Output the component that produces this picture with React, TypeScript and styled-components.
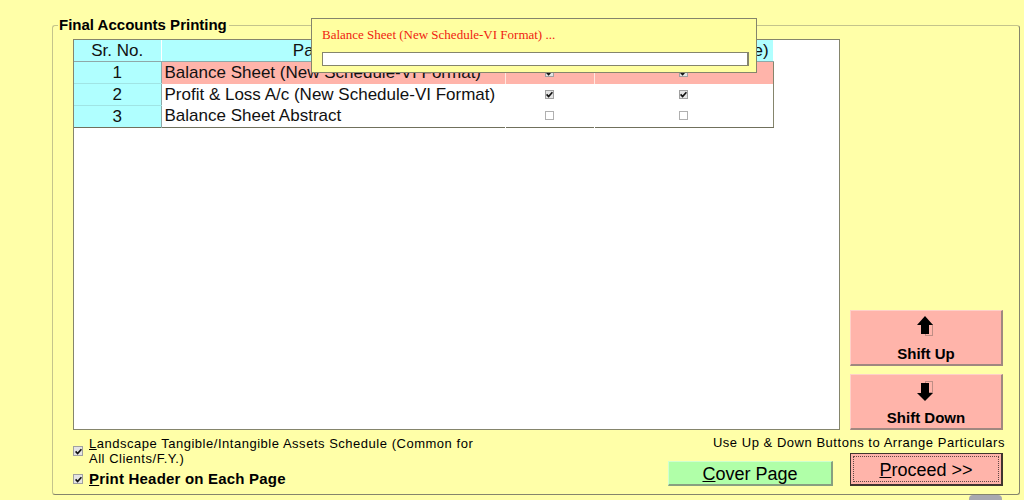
import React from "react"
import styled, { createGlobalStyle } from "styled-components"

const GlobalStyle = createGlobalStyle`
  html, body {
    margin: 0;
    padding: 0;
    background: #ffffa8;
  }
`

const SPage = styled.div`
  position: relative;
  width: 1024px;
  height: 500px;
  overflow: hidden;
  padding: 25px 4px 0 52px;
  box-sizing: border-box;
  background: #ffffa8;
  font-family: "Liberation Sans", Arial, sans-serif;
  color: #000;
`

const SFrame = styled.div`
  position: relative;
  box-sizing: border-box;
  height: 470px;
  padding: 13px 14px 0 20px;
  border: 1px solid #c4c48c;
  border-right-color: #85856c;
  border-bottom-color: #85856c;
  border-radius: 3px;
`

const SLegend = styled.div`
  position: absolute;
  top: -10px;
  left: 5px;
  padding: 0 2px 0 1px;
  background: #ffffa8;
  font-size: 15px;
  line-height: 17px;
  font-weight: bold;
  white-space: nowrap;
`

const SMainRow = styled.div`
  display: flex;
  height: 391px;
`

const SGridPanel = styled.div`
  box-sizing: border-box;
  width: 767px;
  height: 391px;
  background: #fff;
  border: 1px solid #85856c;
`

const STable = styled.table`
  width: 699px;
  table-layout: fixed;
  border-collapse: collapse;
  border-bottom: 1px solid #70705c;
  border-right: 1px solid #85856c;
  font-size: 17px;
  line-height: 20px;
  color: #111;
`

const SCol = styled.col<{ $w: number }>`
  width: ${(p) => p.$w}px;
`

const SHeadCell = styled.th`
  height: 21px;
  padding: 0;
  background: #b0ffff;
  font-weight: normal;
  text-align: center;
  white-space: nowrap;
  overflow: hidden;
  border-right: 1px solid #fff;
  border-bottom: 1px solid #8fa8a8;
`

const SNumCell = styled.td`
  height: 21px;
  padding: 0;
  background: #b0ffff;
  text-align: center;
  border-right: 1px solid #8fa8a8;

  tr:not(:last-child) > & {
    border-bottom: 1px solid #a0e4e4;
  }
`

const SNameCell = styled.td<{ $active?: boolean }>`
  padding: 0 0 0 3px;
  white-space: nowrap;
  background: ${(p) => (p.$active ? "#ffb4aa" : "#fff")};
`

const SCheckCell = styled.td<{ $active?: boolean }>`
  padding: 0 0 1px;
  text-align: center;
  line-height: 0;
  background: ${(p) => (p.$active ? "#ffb4aa" : "#fff")};
  border-left: 1px solid ${(p) => (p.$active ? "#ffe8e0" : "#fff")};
`

const SBox = styled.span<{ $on?: boolean; $size?: number }>`
  display: inline-flex;
  align-items: center;
  justify-content: center;
  box-sizing: border-box;
  flex: none;
  width: ${(p) => p.$size ?? 9}px;
  height: ${(p) => p.$size ?? 9}px;
  border: 1px solid ${(p) => (p.$on ? "#a0a0a0" : "#b0b0b0")};
  background: ${(p) => (p.$on ? "#e4e4e4" : "#fff")};
`

const SSideColumn = styled.div`
  display: flex;
  flex-direction: column;
  justify-content: flex-end;
  gap: 8px;
  width: 153px;
  margin-left: 10px;
`

const SShiftButton = styled.div`
  box-sizing: border-box;
  height: 56px;
  display: flex;
  flex-direction: column;
  align-items: center;
  padding-top: 5px;
  background: #ffb4aa;
  border: 1px solid #ffb4aa;
  border-top-color: #ffd0c8;
  border-left-color: #ffd0c8;
  border-right: 2px solid #a08880;
  border-bottom: 2px solid #a08880;
  font-size: 15px;
  line-height: 16px;
  font-weight: bold;
`

const SArrow = styled.svg`
  display: block;
  width: 20px;
  height: 24px;
  margin-bottom: 6px;
`

const SFooter = styled.div`
  display: flex;
  justify-content: space-between;
`

const SChecks = styled.div`
  display: flex;
  flex-direction: column;
  gap: 3px;
  padding-top: 6px;
`

const SCheckRow = styled.div`
  display: flex;
  align-items: center;
  gap: 6px;
`

const SCheckText = styled.div<{ $strong?: boolean }>`
  width: ${(p) => (p.$strong ? "auto" : "392px")};
  font-size: ${(p) => (p.$strong ? "15px" : "13px")};
  font-weight: ${(p) => (p.$strong ? "bold" : "normal")};
  line-height: ${(p) => (p.$strong ? "20px" : "15px")};
  letter-spacing: ${(p) => (p.$strong ? "0.2px" : "0.52px")};
`

const SActions = styled.div`
  display: flex;
  flex-direction: column;
  align-items: flex-end;
  padding-top: 5px;
`

const SHint = styled.div`
  font-size: 13px;
  line-height: 16px;
  letter-spacing: 0.53px;
  white-space: nowrap;
`

const SButtonRow = styled.div`
  display: flex;
  align-items: flex-end;
  gap: 17px;
  margin: 2px 2px 0 0;
`

const SCoverButton = styled.div`
  box-sizing: border-box;
  width: 165px;
  height: 25px;
  padding-top: 2px;
  display: flex;
  align-items: center;
  justify-content: center;
  background: #b0ffa8;
  border-right: 2px solid #88a080;
  border-bottom: 2px solid #88a080;
  border-top: 1px solid #d0ffd0;
  border-left: 1px solid #d0ffd0;
  font-size: 18px;
`

const SProceedButton = styled.div`
  box-sizing: border-box;
  width: 153px;
  height: 33px;
  padding: 2px;
  background: #ffb4aa;
  border: 1px solid #40352f;
  border-bottom-width: 2px;
  border-right-width: 2px;
`

const SFocusRing = styled.div`
  height: 100%;
  display: flex;
  align-items: center;
  justify-content: center;
  box-sizing: border-box;
  padding-top: 2px;
  border: 1px dotted #604844;
  font-size: 18px;
`

const SPopup = styled.div`
  position: absolute;
  top: 18px;
  left: 311px;
  box-sizing: border-box;
  width: 446px;
  height: 55px;
  padding: 8px 7px 0 10px;
  background: #ffffa0;
  border: 1px solid #85856c;
`

const SPopupText = styled.div`
  font-family: "Liberation Serif", "Times New Roman", serif;
  font-size: 13px;
  line-height: 16px;
  color: #f01c10;
`

const SProgress = styled.div`
  box-sizing: border-box;
  height: 14px;
  margin-top: 9px;
  background: #fff;
  border: 1px solid #85856c;
  border-right-width: 2px;
`

const SCornerTab = styled.div`
  position: absolute;
  top: 495px;
  left: 969px;
  width: 33px;
  height: 8px;
  background: #a8a8b0;
  border-radius: 4px 4px 0 0;
`

const rows = [
  { no: 1, name: "Balance Sheet (New Schedule-VI Format)", on: true, active: true },
  { no: 2, name: "Profit & Loss A/c (New Schedule-VI Format)", on: true, active: false },
  { no: 3, name: "Balance Sheet Abstract", on: false, active: false },
]

function Tick({ size = 7 }: { size?: number }) {
  return (
    <svg width={size} height={size} viewBox="0 0 7 7">
      <path d="M0.6 3.4 L2.6 5.6 L6.4 1.2" fill="none" stroke="#111" strokeWidth="1.6" />
    </svg>
  )
}

function ShiftUpIcon() {
  return (
    <SArrow viewBox="0 0 20 24">
      <rect x="9.5" y="8.5" width="7" height="11" fill="none" stroke="#806860" strokeWidth="1" strokeDasharray="1 1" />
      <path d="M9 0 L17 9 L13 9 L13 18 L5 18 L5 9 L1 9 Z" fill="#000" />
    </SArrow>
  )
}

function ShiftDownIcon() {
  return (
    <SArrow viewBox="0 0 20 24">
      <rect x="9.5" y="1.5" width="7" height="11" fill="none" stroke="#806860" strokeWidth="1" strokeDasharray="1 1" />
      <path d="M5 3 L13 3 L13 13 L17 13 L9 21 L1 13 L5 13 Z" fill="#000" />
    </SArrow>
  )
}

export default function App() {
  return (
    <SPage>
      <GlobalStyle />
      <SFrame>
        <SLegend>Final Accounts Printing</SLegend>
        <SMainRow>
          <SGridPanel>
            <STable>
              <colgroup>
                <SCol $w={87} />
                <SCol $w={344} />
                <SCol $w={89} />
                <SCol $w={179} />
              </colgroup>
              <thead>
                <tr>
                  <SHeadCell>Sr. No.</SHeadCell>
                  <SHeadCell>Particulars</SHeadCell>
                  <SHeadCell>Print</SHeadCell>
                  <SHeadCell>Print (A4 - Landscape)</SHeadCell>
                </tr>
              </thead>
              <tbody>
                {rows.map((row) => (
                  <tr key={row.no}>
                    <SNumCell>{row.no}</SNumCell>
                    <SNameCell $active={row.active}>{row.name}</SNameCell>
                    <SCheckCell $active={row.active}>
                      <SBox $on={row.on}>{row.on && <Tick />}</SBox>
                    </SCheckCell>
                    <SCheckCell $active={row.active}>
                      <SBox $on={row.on}>{row.on && <Tick />}</SBox>
                    </SCheckCell>
                  </tr>
                ))}
              </tbody>
            </STable>
          </SGridPanel>
          <SSideColumn>
            <SShiftButton>
              <ShiftUpIcon />
              Shift Up
            </SShiftButton>
            <SShiftButton>
              <ShiftDownIcon />
              Shift Down
            </SShiftButton>
          </SSideColumn>
        </SMainRow>
        <SFooter>
          <SChecks>
            <SCheckRow>
              <SBox $on $size={10}><Tick /></SBox>
              <SCheckText>
                <u>L</u>andscape Tangible/Intangible Assets Schedule (Common for All Clients/F.Y.)
              </SCheckText>
            </SCheckRow>
            <SCheckRow>
              <SBox $on $size={10}><Tick /></SBox>
              <SCheckText $strong>
                <u>P</u>rint Header on Each Page
              </SCheckText>
            </SCheckRow>
          </SChecks>
          <SActions>
            <SHint>Use Up &amp; Down Buttons to Arrange Particulars</SHint>
            <SButtonRow>
              <SCoverButton>
                <span>
                  <u>C</u>over Page
                </span>
              </SCoverButton>
              <SProceedButton>
                <SFocusRing>
                  <span>
                    <u>P</u>roceed &gt;&gt;
                  </span>
                </SFocusRing>
              </SProceedButton>
            </SButtonRow>
          </SActions>
        </SFooter>
      </SFrame>
      <SPopup>
        <SPopupText>Balance Sheet (New Schedule-VI Format) ...</SPopupText>
        <SProgress />
      </SPopup>
      <SCornerTab />
    </SPage>
  )
}
